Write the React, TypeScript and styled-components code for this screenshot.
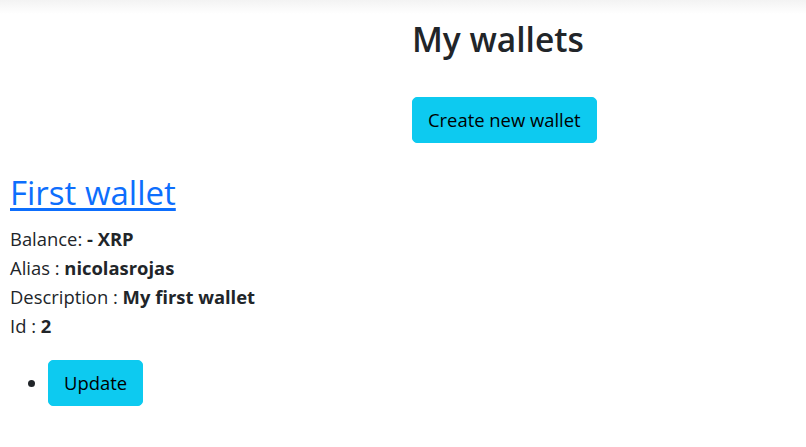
import React from "react";
import styled, { createGlobalStyle } from "styled-components";

type Wallet = {
  id: number;
  name: string;
  balance: string;
  alias: string;
  description: string;
};

const wallets: Wallet[] = [
  {
    id: 2,
    name: "First wallet",
    balance: "-",
    alias: "nicolasrojas",
    description: "My first wallet",
  },
];

const GlobalStyle = createGlobalStyle`
  * { box-sizing: border-box; }
  body {
    margin: 0;
    font-family: "Open Sans", "Noto Sans", sans-serif;
    font-size: 18.4px;
    line-height: 1.5;
    color: #212529;
    background: #fff;
  }
`;

export default function App() {
  return (
    <>
      <GlobalStyle />
      <S.TopShade />
      <S.Page>
        <S.Header>
          <div />
          <S.HeaderCol>
            <S.Title>My wallets</S.Title>
            <S.Button $size="lg">Create new wallet</S.Button>
          </S.HeaderCol>
        </S.Header>
        {wallets.map((wallet) => (
          <S.WalletCard key={wallet.id}>
            <S.WalletLink href="#">{wallet.name}</S.WalletLink>
            <S.Field>
              Balance: <b>{wallet.balance} XRP</b>
            </S.Field>
            <S.Field>
              Alias : <b>{wallet.alias}</b>
            </S.Field>
            <S.Field>
              Description : <b>{wallet.description}</b>
            </S.Field>
            <S.Field>
              Id : <b>{wallet.id}</b>
            </S.Field>
            <S.Actions>
              <li>
                <S.Button $size="md">Update</S.Button>
              </li>
            </S.Actions>
          </S.WalletCard>
        ))}
      </S.Page>
    </>
  );
}

const S = {
  TopShade: styled.div`
    height: 14px;
    background: linear-gradient(#f3f3f3, #ffffff);
  `,
  Page: styled.div`
    padding: 0 10px;
  `,
  Header: styled.div`
    display: grid;
    grid-template-columns: 1fr 1fr;
    margin-left: -10px;
  `,
  HeaderCol: styled.div`
    display: flex;
    flex-direction: column;
    align-items: flex-start;
    padding-left: 14px;
  `,
  Title: styled.h2`
    margin: 5px 0 0;
    font-size: 33.5px;
    font-weight: 600;
    line-height: 1.2;
  `,
  Button: styled.button<{ $size: "lg" | "md" }>`
    margin-top: ${({ $size }) => ($size === "lg" ? "38px" : "0")};
    padding: 8px 15px;
    font-family: inherit;
    font-size: 18.4px;
    line-height: 1.5;
    color: #000;
    background-color: #0dcaf0;
    border: 1px solid #0dcaf0;
    border-radius: 5px;
    cursor: pointer;
  `,
  WalletCard: styled.div`
    margin-top: 30px;
  `,
  WalletLink: styled.a`
    display: inline-block;
    margin-bottom: 12px;
    font-size: 33px;
    font-weight: 500;
    line-height: 1.2;
    color: #0d6efd;
    text-decoration: underline;
    text-underline-offset: 3px;
  `,
  Field: styled.div`
    line-height: 29px;
    b {
      font-weight: 700;
    }
  `,
  Actions: styled.ul`
    margin: 20px 0 0;
    padding-left: 38px;
  `,
};
